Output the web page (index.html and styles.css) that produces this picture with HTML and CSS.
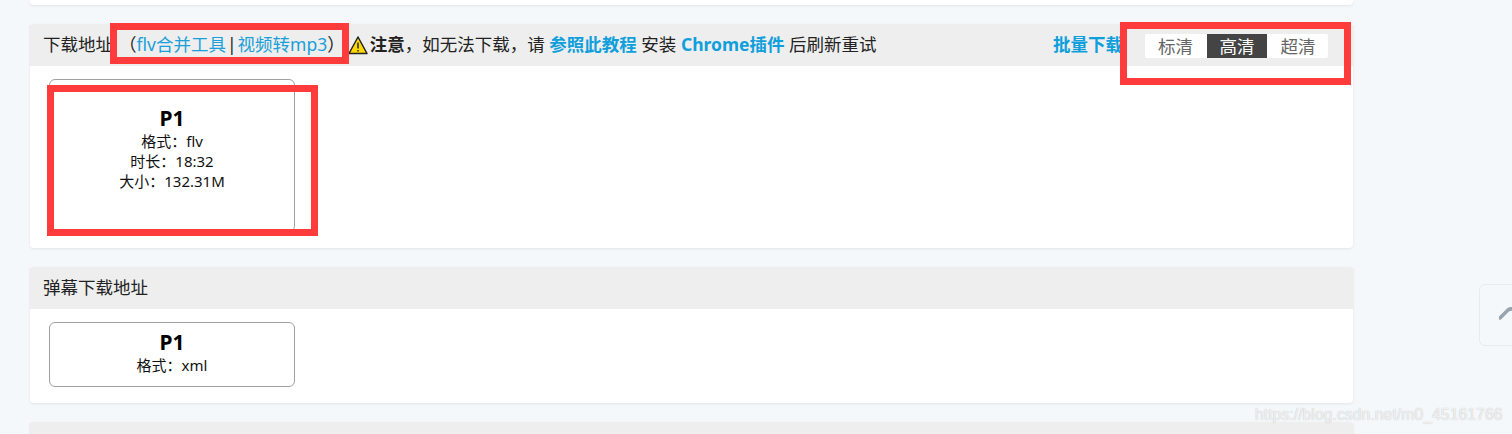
FILE: index.html
```html
<!DOCTYPE html>
<html lang="zh-CN">
<head>
    <meta charset="UTF-8">
    <meta name="viewport" content="width=device-width, initial-scale=1.0">
    <title>下载地址</title>
    <link rel="stylesheet" href="styles.css">
</head>
<body>
    <div class="page">
        <div class="panel panel-stub"></div>

        <section class="panel">
            <header class="panel-head">
                <div class="head-left">
                    <span>下载地址</span>
                    <span class="tools">（<a href="#">flv合并工具</a><span class="sep">|</span><a href="#">视频转mp3</a>）</span>
                    <svg class="warn-icon" width="20" height="20" viewBox="0 0 20 20">
                        <path d="M10 2 L19 18.5 L1 18.5 Z" fill="#ffd800" stroke="#222" stroke-width="1.5" stroke-linejoin="round"/>
                        <path d="M10 7.5 V13.5 M10 15 V16.5" stroke="#222" stroke-width="1.5" fill="none"/>
                    </svg>
                    <span class="notice"><b>注意</b>，如无法下载，请 <a class="strong-link" href="#">参照此教程</a> 安装 <a class="strong-link" href="#">Chrome插件</a> 后刷新重试</span>
                </div>
                <div class="head-right">
                    <a class="strong-link" href="#">批量下载</a>
                    <div class="quality">
                        <span class="quality-item quality-first">标清</span>
                        <span class="quality-item active">高清</span>
                        <span class="quality-item">超清</span>
                    </div>
                </div>
            </header>
            <div class="panel-body">
                <div class="file-card file-card-tall">
                    <div class="file-title">P1</div>
                    <div>格式：flv</div>
                    <div>时长：18:32</div>
                    <div>大小：132.31M</div>
                </div>
            </div>
        </section>

        <section class="panel">
            <header class="panel-head">
                <div class="head-left"><span>弹幕下载地址</span></div>
            </header>
            <div class="panel-body">
                <div class="file-card">
                    <div class="file-title">P1</div>
                    <div>格式：xml</div>
                </div>
            </div>
        </section>

        <section class="panel">
            <header class="panel-head"></header>
        </section>
    </div>

    <!-- 截图上的红框标注 -->
    <div class="mark mark-tools"></div>
    <div class="mark mark-card"></div>
    <div class="mark mark-quality"></div>

    <div class="back-top">
        <svg width="34" height="20" viewBox="0 0 34 20">
            <path d="M1 13 L9 5 Q11 3.5 14 4 L30 4" fill="none" stroke="#97a3ad" stroke-width="3.5" stroke-linecap="round" stroke-linejoin="round"/>
        </svg>
    </div>
    <div class="watermark">https://blog.csdn.net/m0_45161766</div>
</body>
</html>
```

FILE: styles.css
```css
html, body {
    height: 100%;
    margin: 0;
    padding: 0;
    overflow: hidden;
}

body {
    background-color: #f5f8fa;
    font-family: "Noto Sans", "Noto Sans CJK SC", sans-serif;
    color: #222;
}

a {
    color: #1a9fd9;
    text-decoration: none;
}

.page {
    width: 1323px;
    margin-left: 30px;
    display: flex;
    flex-direction: column;
    gap: 19px;
}

.panel {
    background-color: white;
    box-shadow: 0 1px 3px rgba(0,0,0,0.08);
    border-radius: 0 0 4px 4px;
}

.panel-stub {
    height: 5px;
}

.panel-head {
    height: 42px;
    margin: 0 -1px;
    padding: 0 26px 0 14px;
    display: flex;
    align-items: center;
    justify-content: space-between;
    background-color: #eeeeee;
    border-radius: 4px 4px 0 0;
    font-size: 17.5px;
}

.head-left, .head-right {
    display: flex;
    align-items: center;
    white-space: nowrap;
}

.head-left {
    padding-bottom: 3px;
}

.tools {
    margin-left: 6px;
}

.sep {
    margin: 0 1px;
}

.warn-icon {
    margin-left: 3px;
    margin-right: 2px;
    position: relative;
    top: 1px;
}

.strong-link {
    font-weight: bold;
    color: #0f9fdc;
}

.head-right .strong-link {
    margin-right: 22px;
    padding-bottom: 3px;
}

.quality {
    display: flex;
    gap: 1px;
    margin-top: 2px;
    background-color: white;
    border-radius: 2px;
}

.quality-item {
    width: 60px;
    height: 24px;
    line-height: 24px;
    text-align: center;
    color: #666;
}

.quality-first {
    width: 61px;
}

.quality-item.active {
    background-color: #444444;
    color: white;
}

.panel-body {
    padding: 13px 19px 16px;
}

.file-card {
    width: 244px;
    height: 57px;
    padding-top: 6px;
    border: 1px solid #a0a0a0;
    border-radius: 6px;
    text-align: center;
    font-size: 15px;
    line-height: 20px;
    color: #111;
}

.file-card-tall {
    height: 126px;
    padding-top: 25px;
}

.file-title {
    font-size: 21px;
    font-weight: bold;
    line-height: 26px;
    color: #000;
}

.mark {
    position: absolute;
    box-sizing: border-box;
    border: 7px solid #ff3b3b;
}

.mark-tools {
    left: 110px;
    top: 23px;
    width: 239px;
    height: 41px;
}

.mark-card {
    left: 47px;
    top: 85px;
    width: 271px;
    height: 151px;
}

.mark-quality {
    left: 1120px;
    top: 22px;
    width: 231px;
    height: 63px;
}

.back-top {
    position: absolute;
    left: 1479px;
    top: 284px;
    width: 60px;
    height: 62px;
    padding: 20px 0 0 19px;
    box-sizing: border-box;
    border: 1px solid #e6ebf1;
    border-radius: 6px;
}

.watermark {
    position: absolute;
    left: 1255px;
    top: 406px;
    font-family: "Liberation Sans", sans-serif;
    font-size: 15.85px;
    color: rgba(255,255,255,0.8);
    text-shadow: 0 0 1px rgba(0,0,0,0.3);
    white-space: nowrap;
}
```
